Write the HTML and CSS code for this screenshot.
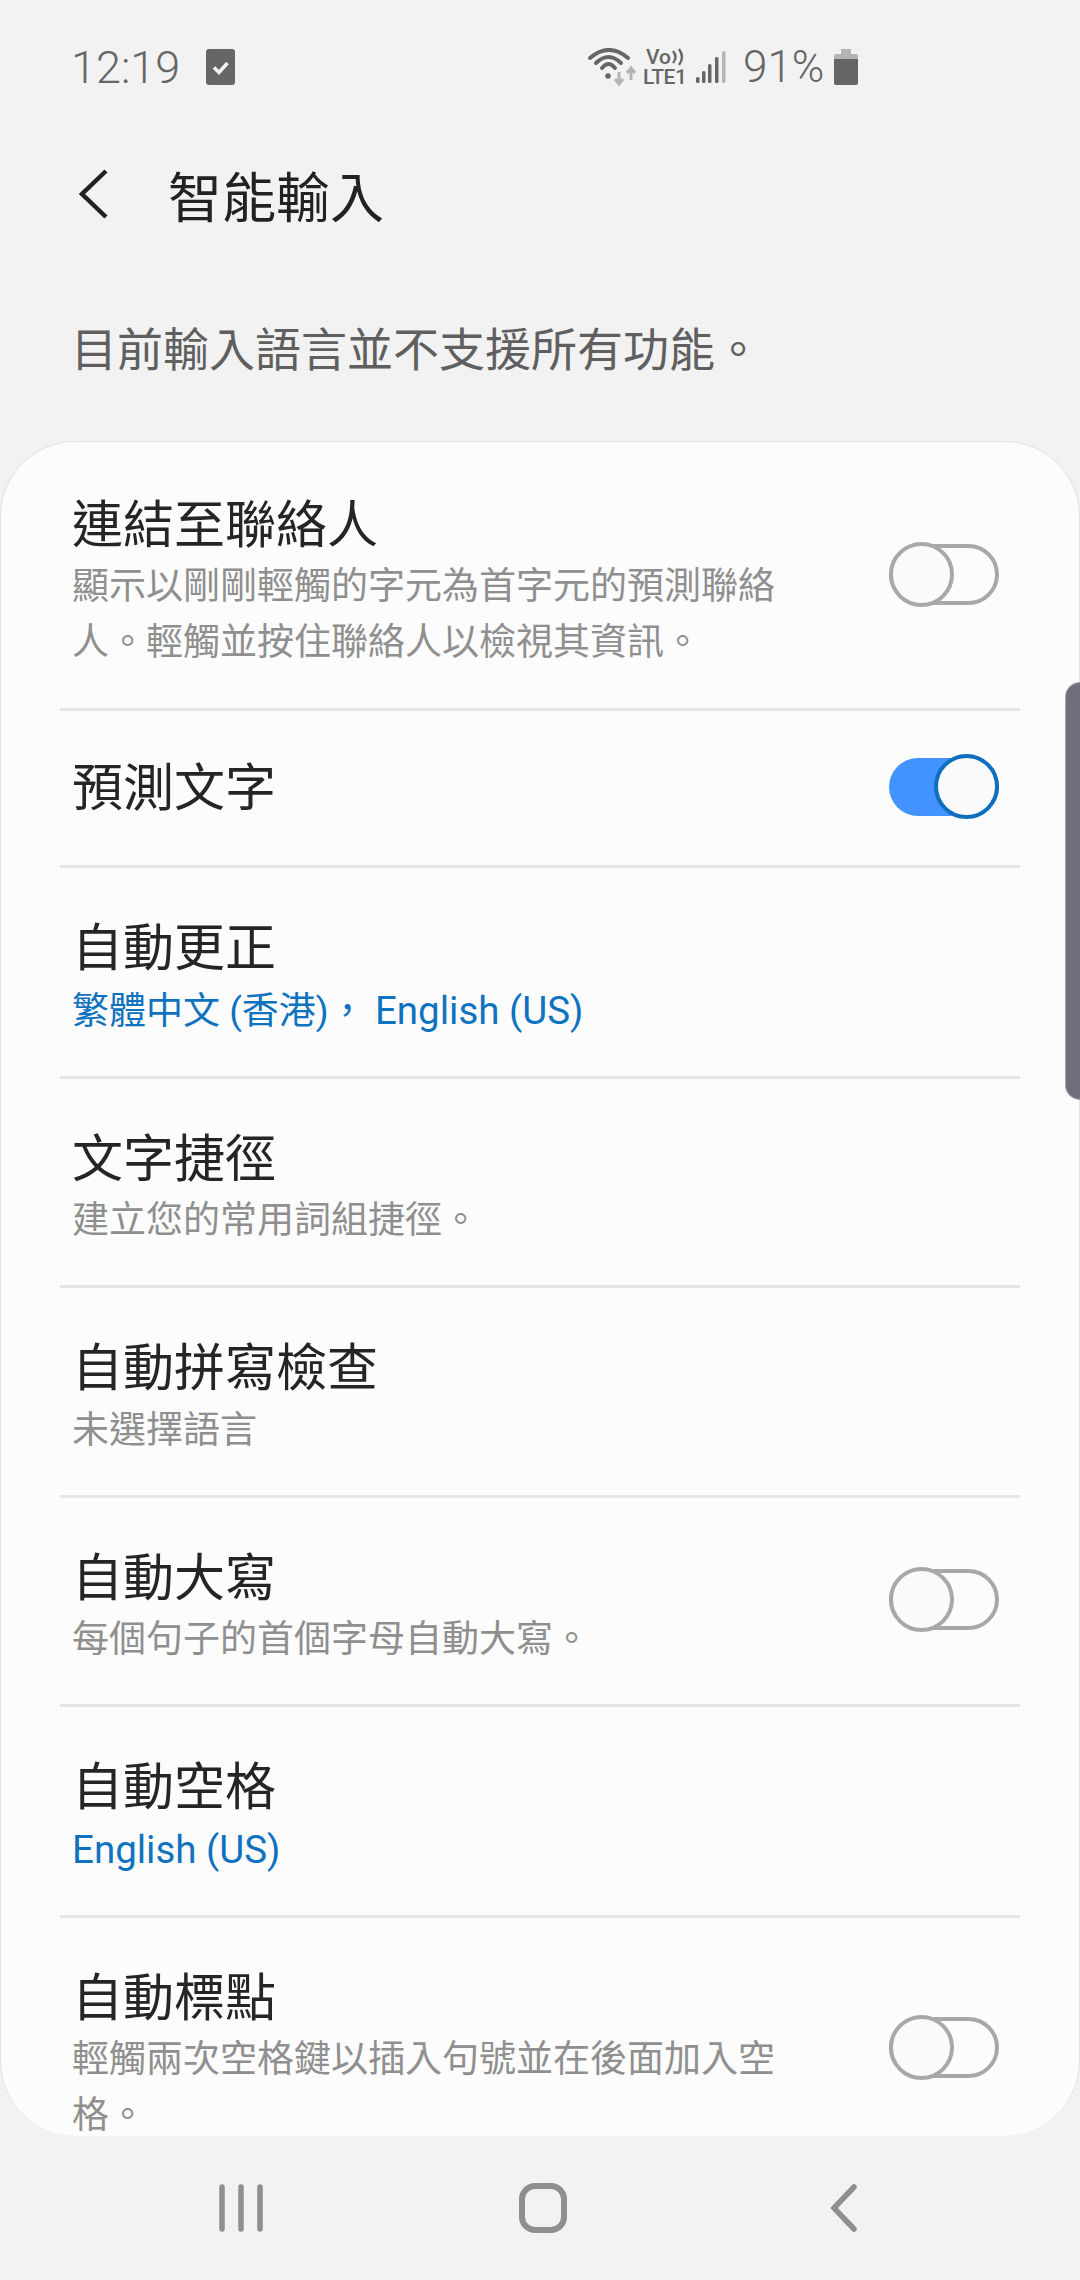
FILE: index.html
```html
<!DOCTYPE html>
<html lang="zh-Hant">

<head>
    <meta charset="UTF-8">
    <meta name="viewport" content="width=device-width, initial-scale=1.0">
    <title>智能輸入</title>
    <link rel="stylesheet" href="styles.css">
</head>

<body>
    <div id="screen">

        <div id="statusbar">
            <span class="clock">12:19</span>
            <svg class="notify" width="29" height="36" viewBox="0 0 29 36">
                <rect x="0" y="0" width="29" height="36" rx="3" fill="#666"/>
                <path d="M8 18.5l5 5 8.5-9.5" fill="none" stroke="#f2f2f2" stroke-width="3.5"/>
            </svg>
            <div class="status-right">
                <svg width="48" height="38" viewBox="588 48 48 38">
                    <path d="M590 58Q609 42 628 58" fill="none" stroke="#666" stroke-width="4" stroke-linecap="round"/>
                    <path d="M596 63Q608.5 51 621 63" fill="none" stroke="#666" stroke-width="4" stroke-linecap="round"/>
                    <path d="M602 68Q608.5 60 615 68" fill="none" stroke="#666" stroke-width="4" stroke-linecap="round"/>
                    <circle cx="608" cy="76" r="2.8" fill="#666"/>
                    <path d="M619 72v11M615 79l4 5 4-5" fill="none" stroke="#b4b4b4" stroke-width="3"/>
                    <path d="M631 80v-11M627 73l4-5 4 5" fill="none" stroke="#b4b4b4" stroke-width="3"/>
                </svg>
                <div class="volte">
                    <div class="vo">Vo<svg width="14" height="18" viewBox="0 0 14 18">
                        <path d="M2 3Q7 9 2 15M8 1Q14 9 8 17" fill="none" stroke="#666" stroke-width="2.4"/>
                    </svg></div>
                    <div class="lte">LTE1</div>
                </div>
                <svg class="signal" width="30" height="34" viewBox="696 51 30 34">
                    <rect x="696" y="78" width="3.5" height="6" rx="1.5" fill="#666"/>
                    <rect x="702" y="72" width="3.5" height="12" rx="1.5" fill="#666"/>
                    <rect x="708" y="65" width="3.5" height="19" rx="1.5" fill="#666"/>
                    <rect x="715" y="58" width="3.5" height="26" rx="1.5" fill="#666"/>
                    <rect x="722" y="52" width="3.5" height="32" rx="1.5" fill="#b4b4b4"/>
                </svg>
                <span class="battery-text">91%</span>
                <svg class="battery" width="24" height="36" viewBox="0 0 24 36">
                    <path d="M7 0h10v5h5a2 2 0 0 1 2 2v3H0V7a2 2 0 0 1 2-2h5z" fill="#b4b4b4"/>
                    <path d="M0 10h24v24a2 2 0 0 1-2 2H2a2 2 0 0 1-2-2z" fill="#666"/>
                </svg>
            </div>
        </div>

        <div id="header">
            <svg class="back" width="34" height="52" viewBox="0 0 34 52">
                <path d="M30 3L6 26l24 23" fill="none" stroke="#222" stroke-width="4.5"/>
            </svg>
            <h1>智能輸入</h1>
        </div>

        <p id="info">目前輸入語言並不支援所有功能。</p>

        <div id="card">
            <div class="row first">
                <div class="row-text">
                    <div class="title">連結至聯絡人</div>
                    <div class="sub">顯示以剛剛輕觸的字元為首字元的預測聯絡人。輕觸並按住聯絡人以檢視其資訊。</div>
                </div>
                <div class="toggle"></div>
            </div>
            <div class="row single">
                <div class="row-text">
                    <div class="title">預測文字</div>
                </div>
                <div class="toggle on"></div>
            </div>
            <div class="row">
                <div class="row-text">
                    <div class="title">自動更正</div>
                    <div class="sub blue">繁體中文 (香港)， <span class="latin">English (US)</span></div>
                </div>
            </div>
            <div class="row">
                <div class="row-text">
                    <div class="title">文字捷徑</div>
                    <div class="sub">建立您的常用詞組捷徑。</div>
                </div>
            </div>
            <div class="row">
                <div class="row-text">
                    <div class="title">自動拼寫檢查</div>
                    <div class="sub">未選擇語言</div>
                </div>
            </div>
            <div class="row">
                <div class="row-text">
                    <div class="title">自動大寫</div>
                    <div class="sub">每個句子的首個字母自動大寫。</div>
                </div>
                <div class="toggle"></div>
            </div>
            <div class="row">
                <div class="row-text">
                    <div class="title">自動空格</div>
                    <div class="sub blue"><span class="latin">English (US)</span></div>
                </div>
            </div>
            <div class="row">
                <div class="row-text">
                    <div class="title">自動標點</div>
                    <div class="sub">輕觸兩次空格鍵以插入句號並在後面加入空格。</div>
                </div>
                <div class="toggle"></div>
            </div>
        </div>

        <div id="navbar">
            <svg width="44" height="48" viewBox="0 0 44 48">
                <path d="M3 3v42M22 3v42M41 3v42" fill="none" stroke="#8f8f8f" stroke-width="5.5" stroke-linecap="round"/>
            </svg>
            <svg class="nav-home" width="48" height="50" viewBox="0 0 48 50">
                <rect x="3" y="3" width="42" height="44" rx="13" fill="none" stroke="#8f8f8f" stroke-width="6"/>
            </svg>
            <svg class="nav-back" width="28" height="48" viewBox="0 0 28 48">
                <path d="M24 3L4 24l20 21" fill="none" stroke="#8f8f8f" stroke-width="5.5" stroke-linecap="round"/>
            </svg>
        </div>

        <div id="scrollbar"></div>
    </div>
</body>

</html>
```

FILE: styles.css
```css
*, *::after {
    box-sizing: border-box;
}

body {
    margin: 0px;
    background: #f2f2f2;
    font-family: Roboto, "Noto Sans CJK TC", sans-serif;
}

#screen {
    width: 1080px;
    height: 2280px;
    position: relative;
    overflow: hidden;
    display: flex;
    flex-direction: column;
}

#statusbar {
    height: 134px;
    padding-left: 71px;
    padding-right: 222px;
    display: flex;
    align-items: center;
    color: #666;
}

.clock {
    font-size: 45px;
    font-weight: 300;
    width: 135px;
}

.status-right {
    margin-left: auto;
    display: flex;
    align-items: center;
}

.volte {
    width: 43px;
    margin-left: 7px;
    font-size: 21px;
    font-weight: 500;
    line-height: 20px;
}

.vo {
    padding-left: 3px;
    display: flex;
    align-items: center;
}

.lte {
    letter-spacing: -0.5px;
    white-space: nowrap;
}

.signal {
    margin-left: 10px;
}

.battery-text {
    font-size: 44px;
    font-weight: 300;
    width: 91px;
    margin-left: 17px;
}

#header {
    height: 120px;
    padding-left: 76px;
    display: flex;
    align-items: center;
}

#header h1 {
    margin: 0px 0px 0px 58px;
    font-size: 54px;
    font-weight: 400;
    color: #222;
}

#info {
    height: 187px;
    margin: 0px;
    padding-left: 71px;
    padding-bottom: 3px;
    display: flex;
    align-items: center;
    font-size: 46px;
    color: #5f5f5f;
}

#card {
    height: 1695px;
    background: #fcfcfc;
    border: 1px solid #e2e2e2;
    border-bottom: none;
    border-radius: 75px;
    overflow: hidden;
}

.row {
    margin: 0px 59px;
    padding: 51px 21px 36px 12px;
    display: flex;
    align-items: center;
    border-bottom: 3px solid #e6e6e6;
}

.row.first {
    padding-top: 53.5px;
    padding-bottom: 37px;
}

.row.single {
    padding-top: 48px;
    padding-bottom: 46px;
}

.row-text {
    width: 720px;
}

.title {
    font-size: 51px;
    line-height: 60px;
    color: #252525;
}

.sub {
    margin-top: 3.5px;
    font-size: 37px;
    line-height: 56px;
    color: #8f8f8f;
}

.sub.blue {
    color: #0f72bf;
}

.latin {
    font-size: 38.5px;
}

.toggle {
    width: 110px;
    height: 61px;
    margin-left: auto;
    margin-bottom: 17px;
    position: relative;
    border: 4px solid #a8a8a8;
    border-radius: 31px;
}

.toggle::after {
    content: "";
    position: absolute;
    left: -4px;
    top: -6px;
    width: 65px;
    height: 65px;
    background: #fafafa;
    border: 4px solid #a8a8a8;
    border-radius: 50%;
}

.toggle.on {
    height: 58px;
    margin-top: -2px;
    margin-bottom: 2px;
    background: #4293ff;
    border: none;
}

.toggle.on::after {
    left: 45px;
    top: -4px;
    border-color: #0f6fbf;
}

#navbar {
    flex: 1;
    padding-left: 219px;
    display: flex;
    align-items: center;
}

.nav-home {
    margin-left: 256px;
}

.nav-back {
    margin-left: 263px;
}

#scrollbar {
    position: absolute;
    right: 0px;
    top: 682px;
    width: 15px;
    height: 418px;
    background: #6f6e7b;
    border-radius: 15px 0px 0px 15px;
    border: 1px solid #a5a5ab;
    border-right: none;
}
```
